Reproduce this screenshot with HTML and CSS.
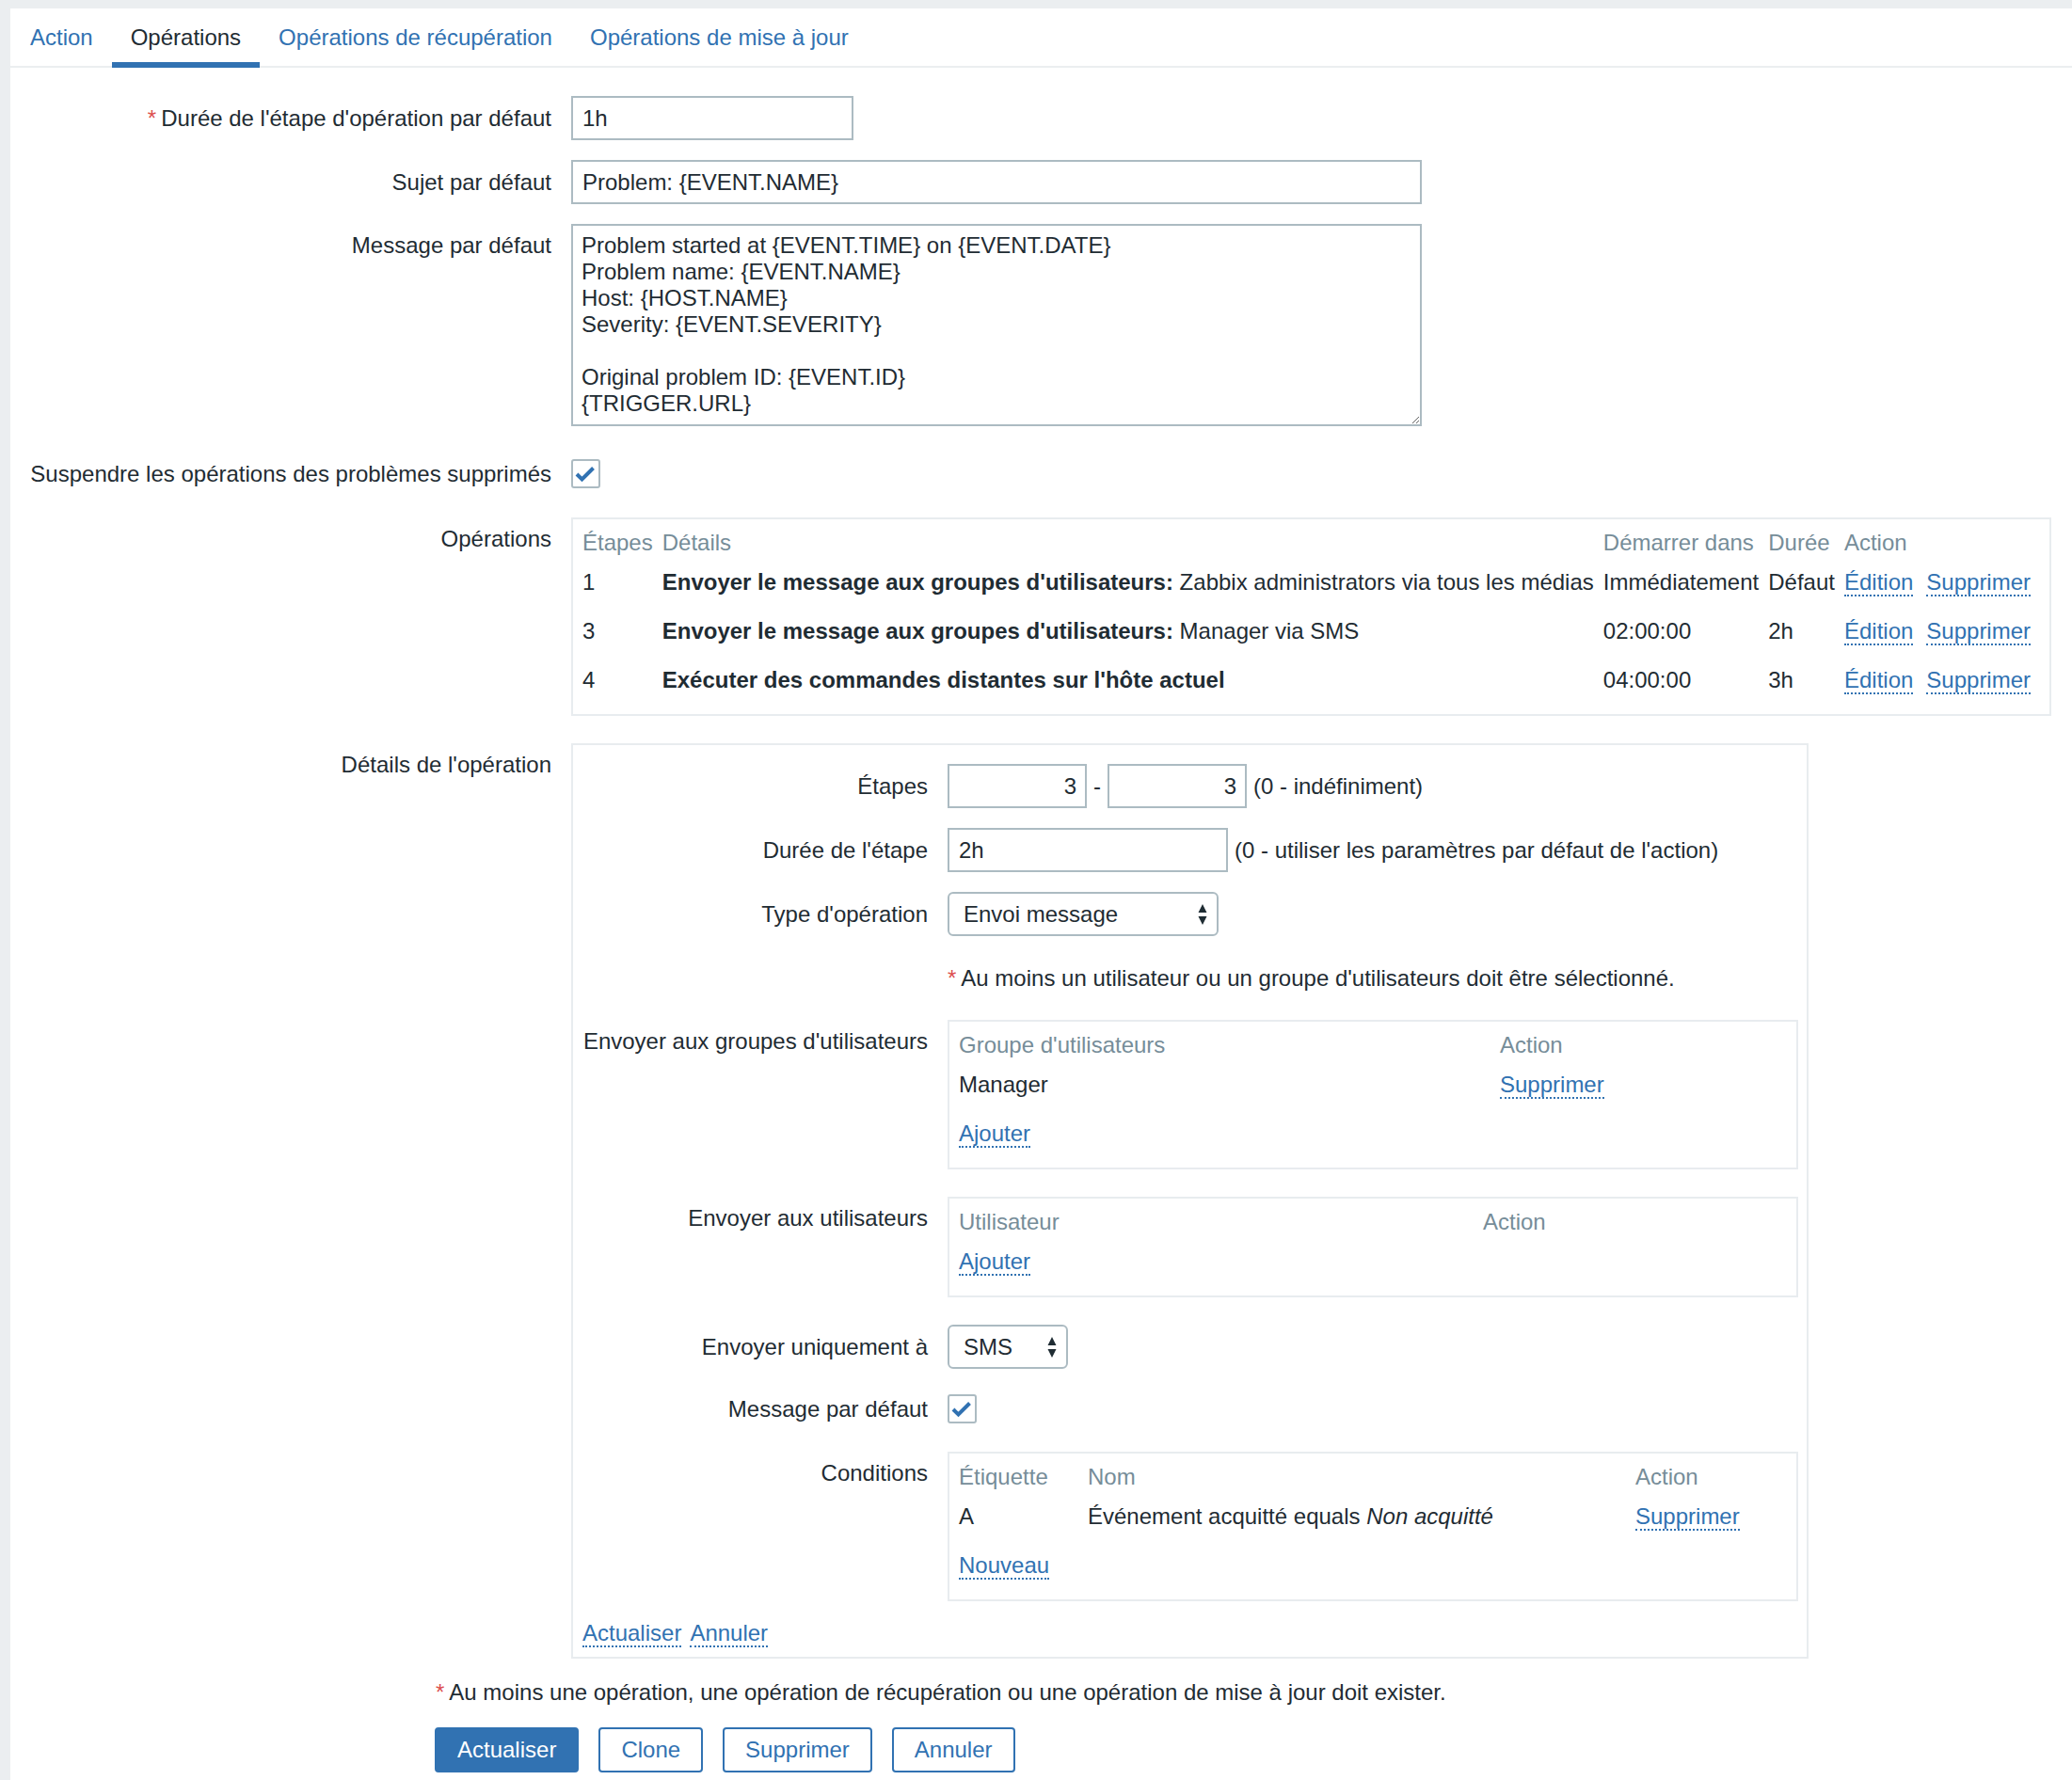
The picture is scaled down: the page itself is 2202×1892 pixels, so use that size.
FILE: index.html
```html
<!DOCTYPE html>
<html lang="fr">
<head>
<meta charset="utf-8">
<title>Action - Opérations</title>
<link rel="stylesheet" href="styles.css">
</head>
<body>
<div class="panel">
  <ul class="tabs">
    <li><a class="tab">Action</a></li>
    <li><a class="tab active">Opérations</a></li>
    <li><a class="tab">Opérations de récupération</a></li>
    <li><a class="tab">Opérations de mise à jour</a></li>
  </ul>

  <div class="form">
    <div class="row mt30">
      <div class="label lp10"><span class="req">*</span>Durée de l'étape d'opération par défaut</div>
      <div class="field"><input class="input w300" type="text" value="1h"></div>
    </div>

    <div class="row mt21">
      <div class="label lp10">Sujet par défaut</div>
      <div class="field"><input class="input w904" type="text" value="Problem: {EVENT.NAME}"></div>
    </div>

    <div class="row mt21">
      <div class="label lp9">Message par défaut</div>
      <div class="field"><textarea class="textarea">Problem started at {EVENT.TIME} on {EVENT.DATE}
Problem name: {EVENT.NAME}
Host: {HOST.NAME}
Severity: {EVENT.SEVERITY}

Original problem ID: {EVENT.ID}
{TRIGGER.URL}</textarea></div>
    </div>

    <div class="row mt35">
      <div class="label lp2">Suspendre les opérations des problèmes supprimés</div>
      <div class="field"><span class="checkbox"><svg width="27" height="27" viewBox="0 0 27 27"><polyline points="4,14 9.5,19.5 21.5,7.5" fill="none" stroke="#3172b2" stroke-width="4"/></svg></span></div>
    </div>

    <div class="row mt31">
      <div class="label lp9">Opérations</div>
      <div class="field">
        <div class="box fit">
          <table class="tbl ops">
            <thead>
              <tr><th>Étapes</th><th>Détails</th><th>Démarrer dans</th><th>Durée</th><th>Action</th></tr>
            </thead>
            <tbody>
              <tr><td>1</td><td><b>Envoyer le message aux groupes d'utilisateurs:</b> Zabbix administrators via tous les médias</td><td>Immédiatement</td><td>Défaut</td><td><a class="link">Édition</a><a class="link next">Supprimer</a></td></tr>
              <tr><td>3</td><td><b>Envoyer le message aux groupes d'utilisateurs:</b> Manager via SMS</td><td>02:00:00</td><td>2h</td><td><a class="link">Édition</a><a class="link next">Supprimer</a></td></tr>
              <tr><td>4</td><td><b>Exécuter des commandes distantes sur l'hôte actuel</b></td><td>04:00:00</td><td>3h</td><td><a class="link">Édition</a><a class="link next">Supprimer</a></td></tr>
            </tbody>
          </table>
        </div>
      </div>
    </div>

    <div class="row mt29">
      <div class="label lp9">Détails de l'opération</div>
      <div class="field">
        <div class="box details">
          <div class="subform">
            <div class="srow mt10">
              <div class="label lp10">Étapes</div>
              <div class="field inl">
                <input class="input w148 num" type="text" value="3">
                <span class="dash">-</span>
                <input class="input w148 num" type="text" value="3">
                <span class="hint">(0 - indéfiniment)</span>
              </div>
            </div>

            <div class="srow mt21">
              <div class="label lp10">Durée de l'étape</div>
              <div class="field inl">
                <input class="input w298" type="text" value="2h">
                <span class="hint">(0 - utiliser les paramètres par défaut de l'action)</span>
              </div>
            </div>

            <div class="srow mt21">
              <div class="label lp10">Type d'opération</div>
              <div class="field">
                <div class="select w288"><span>Envoi message</span><svg class="arrows" width="10" height="22" viewBox="0 0 10 22"><path d="M5 0 L9.5 9 L0.5 9 Z M0.5 13 L9.5 13 L5 22 Z" fill="#1f2c33"/></svg></div>
              </div>
            </div>

            <div class="srow mt31">
              <div class="label"></div>
              <div class="field"><span class="req">*</span>Au moins un utilisateur ou un groupe d'utilisateurs doit être sélectionné.</div>
            </div>

            <div class="srow mt30">
              <div class="label lp9">Envoyer aux groupes d'utilisateurs</div>
              <div class="field">
                <div class="box w904">
                  <table class="tbl fixed">
                    <thead><tr><th class="cw575">Groupe d'utilisateurs</th><th>Action</th></tr></thead>
                    <tbody>
                      <tr><td>Manager</td><td><a class="link">Supprimer</a></td></tr>
                      <tr><td colspan="2"><a class="link">Ajouter</a></td></tr>
                    </tbody>
                  </table>
                </div>
              </div>
            </div>

            <div class="srow mt29">
              <div class="label lp9">Envoyer aux utilisateurs</div>
              <div class="field">
                <div class="box w904">
                  <table class="tbl fixed">
                    <thead><tr><th class="cw557">Utilisateur</th><th>Action</th></tr></thead>
                    <tbody>
                      <tr><td colspan="2"><a class="link">Ajouter</a></td></tr>
                    </tbody>
                  </table>
                </div>
              </div>
            </div>

            <div class="srow mt29">
              <div class="label lp10">Envoyer uniquement à</div>
              <div class="field">
                <div class="select w128"><span>SMS</span><svg class="arrows" width="10" height="22" viewBox="0 0 10 22"><path d="M5 0 L9.5 9 L0.5 9 Z M0.5 13 L9.5 13 L5 22 Z" fill="#1f2c33"/></svg></div>
              </div>
            </div>

            <div class="srow mt27">
              <div class="label lp2">Message par défaut</div>
              <div class="field"><span class="checkbox"><svg width="27" height="27" viewBox="0 0 27 27"><polyline points="4,14 9.5,19.5 21.5,7.5" fill="none" stroke="#3172b2" stroke-width="4"/></svg></span></div>
            </div>

            <div class="srow mt30">
              <div class="label lp9">Conditions</div>
              <div class="field">
                <div class="box w904">
                  <table class="tbl fixed">
                    <thead><tr><th class="cw137">Étiquette</th><th class="cw582">Nom</th><th>Action</th></tr></thead>
                    <tbody>
                      <tr><td>A</td><td>Événement acquitté equals <i>Non acquitté</i></td><td><a class="link">Supprimer</a></td></tr>
                      <tr><td colspan="3"><a class="link">Nouveau</a></td></tr>
                    </tbody>
                  </table>
                </div>
              </div>
            </div>
          </div>
          <div class="sublinks"><a class="link">Actualiser</a><a class="link">Annuler</a></div>
        </div>
      </div>
    </div>
  </div>

  <div class="footnote"><span class="req">*</span>Au moins une opération, une opération de récupération ou une opération de mise à jour doit exister.</div>

  <div class="buttons">
    <button class="btn primary">Actualiser</button>
    <button class="btn">Clone</button>
    <button class="btn">Supprimer</button>
    <button class="btn">Annuler</button>
  </div>
</div>
</body>
</html>
```

FILE: styles.css
```css
* {
  box-sizing: border-box;
}

html, body {
  margin: 0;
  padding: 0;
}

body {
  background: #ebeef0;
  font-family: "Liberation Sans", Arial, sans-serif;
  font-size: 24px;
  line-height: 28px;
  color: #1f2c33;
}

.panel {
  margin: 9px 0 0 11px;
  background: #ffffff;
  min-height: 1883px;
}

/* tabs */
.tabs {
  list-style: none;
  margin: 0;
  padding: 0 0 0 1px;
  display: flex;
  height: 63px;
  border-bottom: 2px solid #ebeef0;
}

.tabs li {
  display: block;
}

.tab {
  display: block;
  padding: 17px 20px 12px;
  border-bottom: 6px solid transparent;
  color: #3172b2;
  white-space: nowrap;
}

.tab.active {
  color: #1f2c33;
  border-bottom-color: #3172b2;
}

/* form grid */
.row {
  display: grid;
  grid-template-columns: 575px 1fr;
  column-gap: 21px;
  align-items: start;
}

.srow {
  display: grid;
  grid-template-columns: 367px 1fr;
  column-gap: 21px;
  align-items: start;
}

.label {
  text-align: right;
  white-space: nowrap;
}

.lp10 { padding-top: 10px; }
.lp9 { padding-top: 9px; }
.lp2 { padding-top: 2px; }

.mt10 { margin-top: 10px; }
.mt21 { margin-top: 21px; }
.mt27 { margin-top: 27px; }
.mt29 { margin-top: 29px; }
.mt30 { margin-top: 30px; }
.mt31 { margin-top: 31px; }
.mt35 { margin-top: 35px; }

.req {
  color: #dc4f4f;
  margin-right: 5px;
}

.field {
  min-width: 0;
}

.field.inl {
  display: flex;
  align-items: center;
  gap: 7px;
}

/* inputs */
.input {
  display: block;
  height: 47px;
  border: 2px solid #acbbc2;
  border-radius: 0;
  padding: 0 10px;
  font-family: "Liberation Sans", Arial, sans-serif;
  font-size: 24px;
  color: #1f2c33;
  background: #ffffff;
  outline: none;
}

.input.num {
  text-align: right;
  padding-right: 9px;
}

.w300 { width: 300px; }
.w904 { width: 904px; }
.w148 { width: 148px; }
.w298 { width: 298px; }
.w288 { width: 288px; }
.w128 { width: 128px; }

.dash {
  display: inline-block;
  width: 8px;
  text-align: center;
}

.hint {
  white-space: nowrap;
}

.textarea {
  display: block;
  width: 904px;
  height: 215px;
  border: 2px solid #acbbc2;
  border-radius: 0;
  padding: 7px 9px;
  font-family: "Liberation Sans", Arial, sans-serif;
  font-size: 24px;
  line-height: 28px;
  color: #1f2c33;
  background: #ffffff;
  outline: none;
  overflow: hidden;
}

/* select */
.select {
  height: 47px;
  border: 2px solid #acbbc2;
  border-radius: 6px;
  background: #ffffff;
  display: flex;
  align-items: center;
  justify-content: space-between;
  padding: 0 10px 0 15px;
}

.arrows {
  display: block;
}

/* checkbox */
.checkbox {
  display: flex;
  align-items: center;
  justify-content: center;
  width: 31px;
  height: 31px;
  border: 2px solid #acbbc2;
  border-radius: 3px;
  background: #ffffff;
}

.checkbox svg {
  display: block;
}

/* boxes & tables */
.box {
  border: 2px solid #e8ecef;
  padding: 10px;
  background: #ffffff;
}

.box.fit {
  width: max-content;
}

.box.details {
  width: 1315px;
}

.tbl {
  border-collapse: collapse;
  border-spacing: 0;
}

.tbl.fixed {
  width: 100%;
  table-layout: fixed;
}

.tbl th {
  font-weight: normal;
  color: #768d99;
  text-align: left;
  padding: 1px 10px 2px 0;
  white-space: nowrap;
}

.tbl td {
  text-align: left;
  padding: 12px 10px 12px 0;
  white-space: nowrap;
  vertical-align: top;
}

.cw575 { width: 575px; }
.cw557 { width: 557px; }
.cw137 { width: 137px; }
.cw582 { width: 582px; }

.link {
  color: #3172b2;
  border-bottom: 2px dotted #3172b2;
  cursor: pointer;
}

.link.next {
  margin-left: 14px;
}

.sublinks {
  margin-top: 21px;
  display: flex;
  gap: 9px;
  line-height: 28px;
}

.sublinks .link {
  line-height: 26px;
}

/* footer */
.footnote {
  margin: 22px 0 0 452px;
}

.buttons {
  margin: 23px 0 0 451px;
  display: flex;
  gap: 21px;
}

.btn {
  height: 48px;
  padding: 0 22px;
  border: 2px solid #3172b2;
  border-radius: 4px;
  background: #ffffff;
  color: #3172b2;
  font-family: "Liberation Sans", Arial, sans-serif;
  font-size: 24px;
  line-height: 28px;
}

.btn.primary {
  background: #3172b2;
  color: #ffffff;
}
```
